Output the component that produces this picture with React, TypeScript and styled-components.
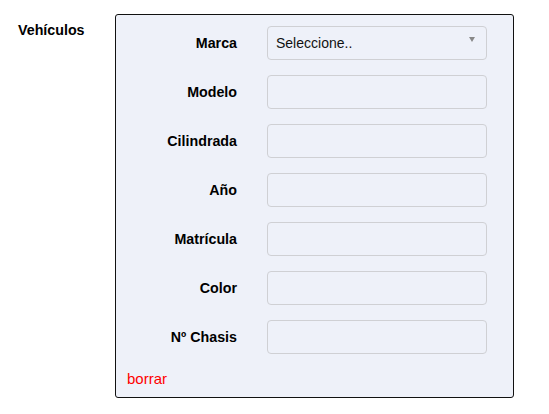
import React from "react";
import styled, { createGlobalStyle } from "styled-components";

const Global = createGlobalStyle`
  html, body { margin: 0; padding: 0; background: #ffffff; }
  body { font-family: "Liberation Sans", Arial, sans-serif; font-size: 14px; color: #000; }
`;

const Page = styled.div`
  display: flex;
  align-items: flex-start;
  padding: 14px 0 0 18px;
`;

const SectionTitle = styled.div`
  width: 97px;
  font-weight: bold;
  font-size: 14.25px;
  line-height: 16px;
  padding-top: 8px;
`;

const Panel = styled.div`
  width: 397px;
  border: 1px solid #111;
  border-radius: 3px;
  background: #eef1f9;
  padding: 11px 0 10px 0;
`;

const Rows = styled.div`
  display: flex;
  flex-direction: column;
  gap: 15px;
`;

const Row = styled.div`
  display: grid;
  grid-template-columns: 121px 220px;
  column-gap: 30px;
  align-items: center;
`;

const Label = styled.label`
  text-align: right;
  font-weight: bold;
  font-size: 14.25px;
`;

const Field = styled.div`
  position: relative;
  box-sizing: border-box;
  height: 34px;
  border: 1px solid #cfd0d4;
  border-radius: 4px;
  background: #eef1f9;
  display: flex;
  align-items: center;
  padding: 0 8px;
  font-size: 14px;
  color: #111;
`;

const Arrow = styled.span`
  position: absolute;
  right: 11px;
  top: 10px;
  width: 0;
  height: 0;
  border-left: 3px solid transparent;
  border-right: 3px solid transparent;
  border-top: 5px solid #888;
`;

const Delete = styled.a`
  display: block;
  margin: 16px 0 0 11px;
  color: #ff0000;
  font-size: 15px;
  line-height: 17px;
  cursor: pointer;
`;

const fields = ["Modelo", "Cilindrada", "Año", "Matrícula", "Color", "Nº Chasis"];

export default function App() {
  return (
    <>
      <Global />
      <Page>
        <SectionTitle>Vehículos</SectionTitle>
        <Panel>
          <Rows>
            <Row>
              <Label>Marca</Label>
              <Field>
                Seleccione..
                <Arrow />
              </Field>
            </Row>
            {fields.map((f) => (
              <Row key={f}>
                <Label>{f}</Label>
                <Field />
              </Row>
            ))}
          </Rows>
          <Delete>borrar</Delete>
        </Panel>
      </Page>
    </>
  );
}
